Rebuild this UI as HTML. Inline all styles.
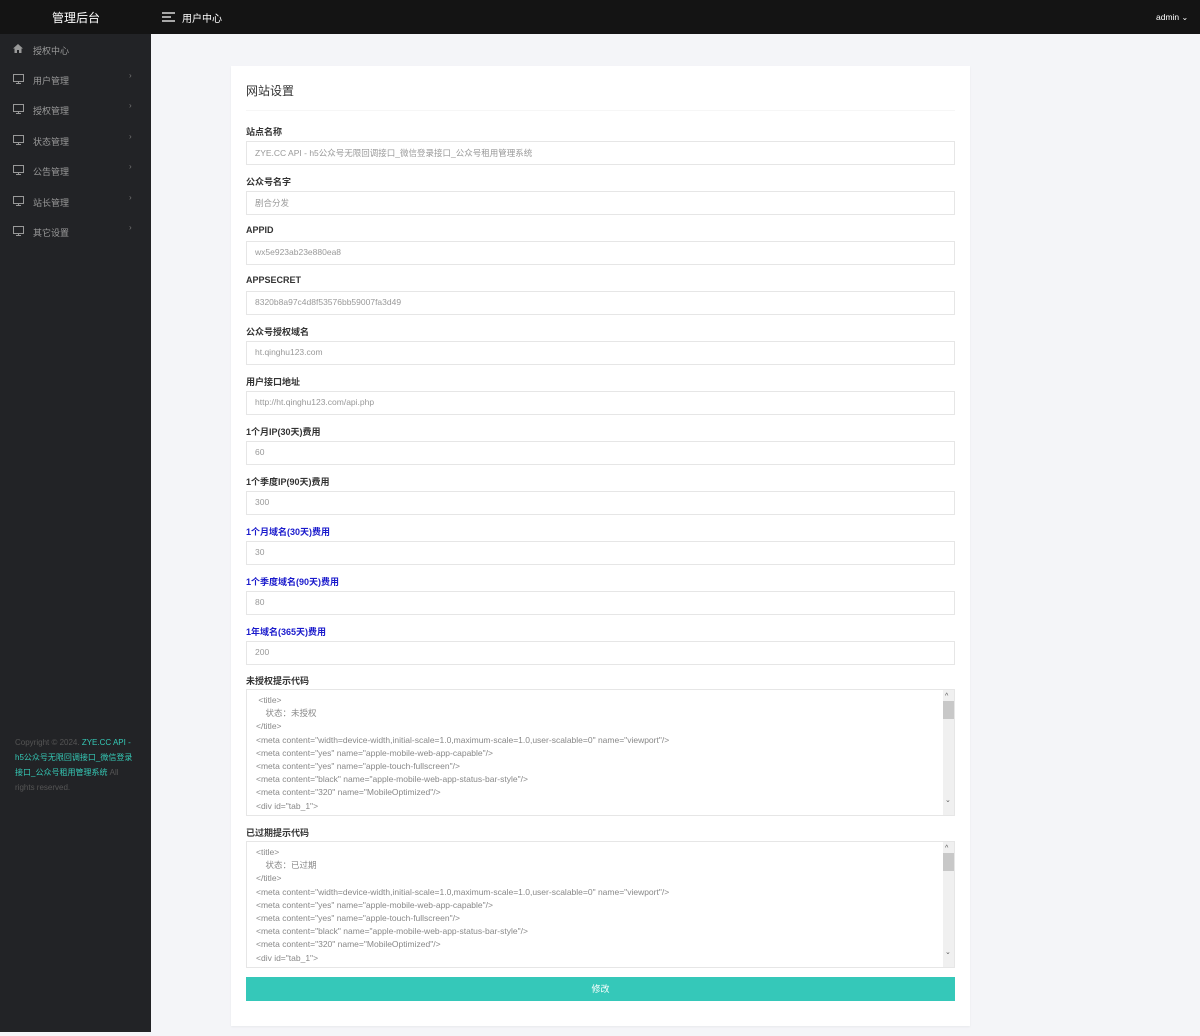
<!DOCTYPE html>
<html><head><meta charset="utf-8"><style>
*{margin:0;padding:0;box-sizing:border-box}
body{width:1200px;height:1036px;background:#f4f5f8;font-family:"Liberation Sans","Noto Sans CJK SC",sans-serif;position:relative;overflow:hidden}
.top{position:absolute;left:0;top:0;width:1200px;height:34px;background:#141414;color:#fff}
.side{position:absolute;left:0;top:34px;width:151px;height:998px;background:#222326}
.nav{position:absolute;left:0;width:151px;height:30px;color:#9a9a9a;font-size:9px}
.nav svg{position:absolute;left:13px;top:10px}
.nav span{position:absolute;left:33px;top:10px}
.nav i{position:absolute;left:129px;top:7px;font-style:normal;font-size:8px;color:#777}
.card{position:absolute;left:231px;top:66px;width:739px;height:960px;background:#fff;box-shadow:0 1px 2px rgba(0,0,0,.05)}
.lab{position:absolute;left:246px;font-size:9px;font-weight:bold;color:#333}
.lab.b{color:#1a1acc}
.inp{position:absolute;left:246px;width:709px;height:24px;border:1px solid #e6e6e6;font-size:8.5px;color:#999;padding:5px 8px;white-space:nowrap}
.ta{position:absolute;left:246px;width:709px;height:127px;border:1px solid #e6e6e6;font-size:8.5px;color:#888;padding:4px 9px;line-height:13.2px;white-space:pre;overflow:hidden}
.sb{position:absolute;right:0;top:0;width:11px;height:125px;background:#f0f0f0}
.sb b{position:absolute;left:0;top:11px;width:11px;height:18px;background:#c8c8c8}
.sb em{position:absolute;left:2px;font-style:normal;font-size:7px;color:#555}
</style></head><body>
<div class="top">
<div style="position:absolute;left:52px;top:9px;font-size:12px;">管理后台</div>
<svg style="position:absolute;left:162px;top:12px" width="13" height="10"><path d="M0 1h13M0 5h9M0 9h13" stroke="#fff" stroke-width="1.3"/></svg>
<div style="position:absolute;left:182px;top:10px;font-size:10px;">用户中心</div>
<div style="position:absolute;left:1156px;top:12px;font-size:8.5px;">admin <span style="font-size:8px">⌄</span></div>
</div>
<div class="side">
<div class="nav" style="top:0"><svg width="10" height="9"><path d="M5 0L0 4.5h1.5V9h2.5V6h2v3h2.5V4.5H10z" fill="#999"/></svg><span>授权中心</span></div>
<div class="nav" style="top:30px"><svg width="11" height="10"><rect x="0.5" y="0.5" width="10" height="7" fill="none" stroke="#999"/><path d="M3 9.5h5M5.5 8v1.5" stroke="#999"/></svg><span>用户管理</span><i>›</i></div>
<div class="nav" style="top:60px"><svg width="11" height="10"><rect x="0.5" y="0.5" width="10" height="7" fill="none" stroke="#999"/><path d="M3 9.5h5M5.5 8v1.5" stroke="#999"/></svg><span>授权管理</span><i>›</i></div>
<div class="nav" style="top:91px"><svg width="11" height="10"><rect x="0.5" y="0.5" width="10" height="7" fill="none" stroke="#999"/><path d="M3 9.5h5M5.5 8v1.5" stroke="#999"/></svg><span>状态管理</span><i>›</i></div>
<div class="nav" style="top:121px"><svg width="11" height="10"><rect x="0.5" y="0.5" width="10" height="7" fill="none" stroke="#999"/><path d="M3 9.5h5M5.5 8v1.5" stroke="#999"/></svg><span>公告管理</span><i>›</i></div>
<div class="nav" style="top:152px"><svg width="11" height="10"><rect x="0.5" y="0.5" width="10" height="7" fill="none" stroke="#999"/><path d="M3 9.5h5M5.5 8v1.5" stroke="#999"/></svg><span>站长管理</span><i>›</i></div>
<div class="nav" style="top:182px"><svg width="11" height="10"><rect x="0.5" y="0.5" width="10" height="7" fill="none" stroke="#999"/><path d="M3 9.5h5M5.5 8v1.5" stroke="#999"/></svg><span>其它设置</span><i>›</i></div>
<div style="position:absolute;left:15px;top:701px;width:125px;font-size:8px;line-height:15px;color:#555">Copyright © 2024. <span style="color:#35c9b6">ZYE.CC API - h5公众号无限回调接口_微信登录接口_公众号租用管理系统</span> All rights reserved.</div>
</div>
<div class="card">
<div style="position:absolute;left:15px;top:16px;font-size:12px;color:#333">网站设置</div>
<div style="position:absolute;left:15px;top:44px;width:709px;height:1px;background:#f6f6f6"></div>
</div>
<div class="lab" style="top:125px">站点名称</div><div class="inp" style="top:141px">ZYE.CC API - h5公众号无限回调接口_微信登录接口_公众号租用管理系统</div>
<div class="lab" style="top:175px">公众号名字</div><div class="inp" style="top:191px">剧合分发</div>
<div class="lab" style="top:225px">APPID</div><div class="inp" style="top:241px">wx5e923ab23e880ea8</div>
<div class="lab" style="top:275px">APPSECRET</div><div class="inp" style="top:291px">8320b8a97c4d8f53576bb59007fa3d49</div>
<div class="lab" style="top:325px">公众号授权域名</div><div class="inp" style="top:341px">ht.qinghu123.com</div>
<div class="lab" style="top:375px">用户接口地址</div><div class="inp" style="top:391px">http://ht.qinghu123.com/api.php</div>
<div class="lab" style="top:425px">1个月IP(30天)费用</div><div class="inp" style="top:441px">60</div>
<div class="lab" style="top:475px">1个季度IP(90天)费用</div><div class="inp" style="top:491px">300</div>
<div class="lab b" style="top:525px">1个月域名(30天)费用</div><div class="inp" style="top:541px">30</div>
<div class="lab b" style="top:575px">1个季度域名(90天)费用</div><div class="inp" style="top:591px">80</div>
<div class="lab b" style="top:625px">1年域名(365天)费用</div><div class="inp" style="top:641px">200</div>
<div class="lab" style="top:674px">未授权提示代码</div>
<div class="ta" style="top:689px"> &lt;title&gt;
    状态：未授权
&lt;/title&gt;
&lt;meta content="width=device-width,initial-scale=1.0,maximum-scale=1.0,user-scalable=0" name="viewport"/&gt;
&lt;meta content="yes" name="apple-mobile-web-app-capable"/&gt;
&lt;meta content="yes" name="apple-touch-fullscreen"/&gt;
&lt;meta content="black" name="apple-mobile-web-app-status-bar-style"/&gt;
&lt;meta content="320" name="MobileOptimized"/&gt;
&lt;div id="tab_1"&gt;<div class="sb"><em style="top:0">^</em><b></b><em style="top:104px">⌄</em></div></div>
<div class="lab" style="top:826px">已过期提示代码</div>
<div class="ta" style="top:841px">&lt;title&gt;
    状态：已过期
&lt;/title&gt;
&lt;meta content="width=device-width,initial-scale=1.0,maximum-scale=1.0,user-scalable=0" name="viewport"/&gt;
&lt;meta content="yes" name="apple-mobile-web-app-capable"/&gt;
&lt;meta content="yes" name="apple-touch-fullscreen"/&gt;
&lt;meta content="black" name="apple-mobile-web-app-status-bar-style"/&gt;
&lt;meta content="320" name="MobileOptimized"/&gt;
&lt;div id="tab_1"&gt;<div class="sb"><em style="top:0">^</em><b></b><em style="top:104px">⌄</em></div></div>
<div style="position:absolute;left:246px;top:977px;width:709px;height:24px;background:#35c8b9;color:#fff;font-size:9px;text-align:center;line-height:24px">修改</div>
</body></html>
